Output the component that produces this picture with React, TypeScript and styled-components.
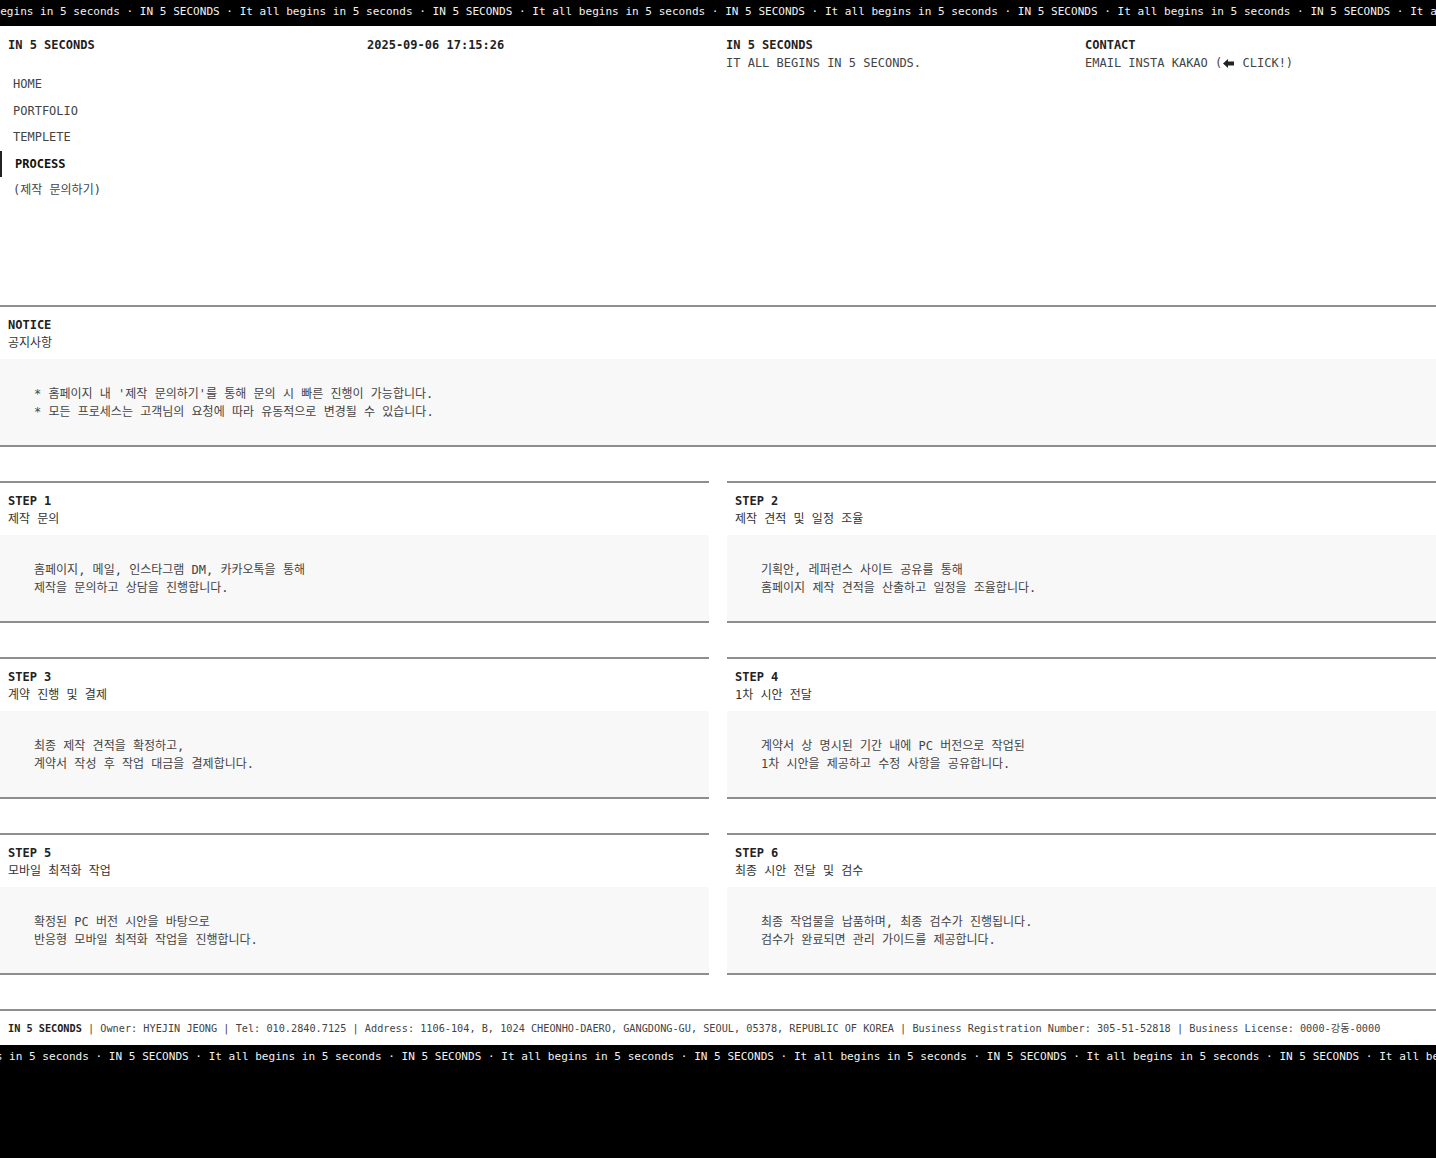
import React from "react";
import styled, { createGlobalStyle } from "styled-components";

const MONO = `"DejaVu Sans Mono", "Noto Sans CJK KR", monospace`;

const GlobalStyle = createGlobalStyle`
  html, body {
    margin: 0;
    padding: 0;
    background: #000;
  }
  body {
    font-family: ${MONO};
    color: #222;
    -webkit-font-smoothing: antialiased;
  }
  * {
    box-sizing: border-box;
  }
`;

const MARQUEE_UNIT = "It all begins in 5 seconds · IN 5 SECONDS · ";

const navItems = ["HOME", "PORTFOLIO", "TEMPLETE", "PROCESS", "(제작 문의하기)"];

const steps = [
  {
    title: "STEP 1",
    sub: "제작 문의",
    lines: ["홈페이지, 메일, 인스타그램 DM, 카카오톡을 통해", "제작을 문의하고 상담을 진행합니다."],
  },
  {
    title: "STEP 2",
    sub: "제작 견적 및 일정 조율",
    lines: ["기획안, 레퍼런스 사이트 공유를 통해", "홈페이지 제작 견적을 산출하고 일정을 조율합니다."],
  },
  {
    title: "STEP 3",
    sub: "계약 진행 및 결제",
    lines: ["최종 제작 견적을 확정하고,", "계약서 작성 후 작업 대금을 결제합니다."],
  },
  {
    title: "STEP 4",
    sub: "1차 시안 전달",
    lines: ["계약서 상 명시된 기간 내에 PC 버전으로 작업된", "1차 시안을 제공하고 수정 사항을 공유합니다."],
  },
  {
    title: "STEP 5",
    sub: "모바일 최적화 작업",
    lines: ["확정된 PC 버전 시안을 바탕으로", "반응형 모바일 최적화 작업을 진행합니다."],
  },
  {
    title: "STEP 6",
    sub: "최종 시안 전달 및 검수",
    lines: ["최종 작업물을 납품하며, 최종 검수가 진행됩니다.", "검수가 완료되면 관리 가이드를 제공합니다."],
  },
];

const Marquee = ({ offset }: { offset: number }): JSX.Element => (
  <MarqueeBar>
    <MarqueeTrack style={{ transform: `translateX(${-offset}px)` }}>
      {MARQUEE_UNIT.repeat(8)}
    </MarqueeTrack>
  </MarqueeBar>
);

const LeftArrow = (): JSX.Element => (
  <ArrowIcon viewBox="0 0 11 9" aria-hidden="true">
    <path d="M0 4.5 L5 0 L5 2.6 L11 2.6 L11 6.4 L5 6.4 L5 9 Z" fill="#222" />
  </ArrowIcon>
);

const Block = ({
  title,
  sub,
  lines,
}: {
  title: string;
  sub: string;
  lines: string[];
}): JSX.Element => (
  <Section>
    <SectionHead>
      <SectionTitle>{title}</SectionTitle>
      <SectionSub>{sub}</SectionSub>
    </SectionHead>
    <SectionBody>
      {lines.map((l) => (
        <BodyLine key={l}>{l}</BodyLine>
      ))}
    </SectionBody>
  </Section>
);

const App = (): JSX.Element => {
  return (
    <>
      <GlobalStyle />
      <Marquee offset={53} />
      <Page>
        <Header>
          <Column>
            <Strong>IN 5 SECONDS</Strong>
            <Nav>
              {navItems.map((item) => (
                <NavItem key={item} $active={item === "PROCESS"}>
                  {item}
                </NavItem>
              ))}
            </Nav>
          </Column>
          <Column>
            <Strong>2025-09-06 17:15:26</Strong>
          </Column>
          <Column>
            <Strong>IN 5 SECONDS</Strong>
            <Plain>IT ALL BEGINS IN 5 SECONDS.</Plain>
          </Column>
          <Column>
            <Strong>CONTACT</Strong>
            <Plain>
              EMAIL INSTA KAKAO (<LeftArrow /> CLICK!)
            </Plain>
          </Column>
        </Header>

        <Block
          title="NOTICE"
          sub="공지사항"
          lines={[
            "* 홈페이지 내 '제작 문의하기'를 통해 문의 시 빠른 진행이 가능합니다.",
            "* 모든 프로세스는 고객님의 요청에 따라 유동적으로 변경될 수 있습니다.",
          ]}
        />

        <StepGrid>
          {steps.map((s) => (
            <Block key={s.title} title={s.title} sub={s.sub} lines={s.lines} />
          ))}
        </StepGrid>

        <Footer>
          <b>IN 5 SECONDS</b> | Owner: HYEJIN JEONG | Tel: 010.2840.7125 | Address: 1106-104, B,
          1024 CHEONHO-DAERO, GANGDONG-GU, SEOUL, 05378, REPUBLIC OF KOREA | Business Registration
          Number: 305-51-52818 | Business License: 0000-강동-0000
        </Footer>
      </Page>
      <Marquee offset={84} />
    </>
  );
};

const MarqueeBar = styled.div`
  background: #000;
  color: #f2f2f2;
  overflow: hidden;
  height: 26px;
  padding-top: 5px;
  font-size: 11.06px;
  line-height: 14px;
  white-space: nowrap;
`;

const MarqueeTrack = styled.div`
  display: inline-block;
  white-space: pre;
`;

const Page = styled.div`
  background: #fff;
`;

const Header = styled.header`
  display: grid;
  grid-template-columns: repeat(4, 1fr);
  height: 279px;
  padding-top: 10px;
  font-size: 12px;
  line-height: 18px;
`;

const Column = styled.div`
  display: flex;
  flex-direction: column;
  padding-left: 8px;
`;

const Strong = styled.div`
  font-weight: 700;
  color: #222;
`;

const Plain = styled.div`
  color: #444;
  display: flex;
  align-items: center;
  white-space: pre;
`;

const ArrowIcon = styled.svg`
  width: 11px;
  height: 9px;
  margin: 0 1px;
`;

const Nav = styled.nav`
  display: flex;
  flex-direction: column;
  margin: 17px 0 0 -8px;
`;

const NavItem = styled.div<{ $active?: boolean }>`
  padding: 4px 0 4px 13px;
  line-height: 18.5px;
  color: ${(p) => (p.$active ? "#111" : "#444")};
  font-weight: ${(p) => (p.$active ? 700 : 400)};
  border-left: ${(p) => (p.$active ? "2px solid #222" : "none")};
`;

const Section = styled.section`
  border-top: 2px solid #8e8e8e;
  border-bottom: 2px solid #8e8e8e;
  font-size: 12px;
  line-height: 18px;
  margin-bottom: 34px;
`;

const SectionHead = styled.div`
  padding: 9px 8px 7px;
`;

const SectionTitle = styled.div`
  font-weight: 700;
  color: #222;
`;

const SectionSub = styled.div`
  color: #333;
`;

const SectionBody = styled.div`
  background: #f8f8f8;
  padding: 26px 26px 24px 34px;
  color: #444;
`;

const BodyLine = styled.div`
  white-space: pre;
`;

const StepGrid = styled.div`
  display: grid;
  grid-template-columns: 1fr 1fr;
  column-gap: 18px;
  margin-top: 1px;
`;

const Footer = styled.footer`
  border-top: 2px solid #8e8e8e;
  padding: 10px 8px 8px;
  font-size: 10.23px;
  line-height: 16px;
  color: #444;
  white-space: nowrap;
  overflow: hidden;

  b {
    color: #222;
    font-weight: 700;
  }
`;

export default App;
